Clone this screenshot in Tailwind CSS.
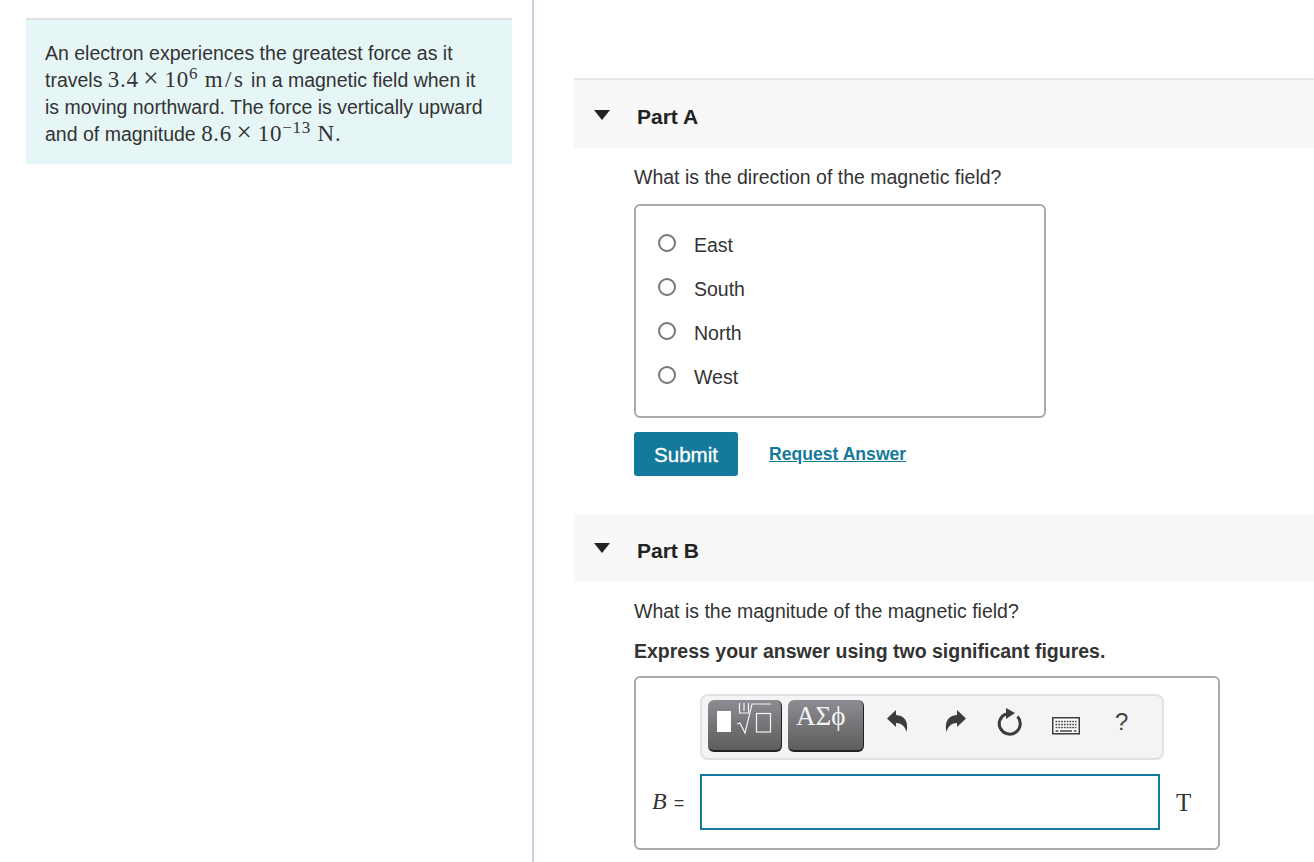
<!DOCTYPE html>
<html><head><meta charset="utf-8">
<script src="https://cdn.jsdelivr.net/npm/@tailwindcss/browser@4"></script>
</head>
<body class="bg-white overflow-hidden">
<div class="flex w-[1314px] h-[862px] overflow-hidden font-['Liberation_Sans',Arial,sans-serif] text-[19.5px] leading-[27px] text-[#333333]">
  <div class="w-[534px] shrink-0 h-full border-r-2 border-[#c6d4e4] pt-[18px] pl-[26px] pr-[20px]">
    <div class="border-t-2 border-[#e0e0e0] bg-[#e6f6f7] h-[146px] pt-[20px] pl-[19px] pr-[10px]">
      <p class="h-[27px] whitespace-nowrap">An electron experiences the greatest force as it</p>
      <p class="h-[27px] whitespace-nowrap">travels <span class="font-['Liberation_Serif',serif] text-[23px] leading-[20px] tracking-[0.7px]">3.4 <span class="text-[27px] leading-[20px] ml-[-2px] mr-[-1px]">×</span> 10<sup class="text-[17px] leading-none top-[-8px] align-baseline relative">6</sup> <span class="tracking-[2.6px]">m/s</span></span> in a magnetic field when it</p>
      <p class="h-[27px] whitespace-nowrap">is moving northward. The force is vertically upward</p>
      <p class="h-[27px] whitespace-nowrap">and of magnitude <span class="font-['Liberation_Serif',serif] text-[23px] leading-[20px] tracking-[0.7px]">8.6 <span class="text-[27px] leading-[20px] ml-[-2px] mr-[-1px]">×</span> 10<sup class="text-[17px] leading-none top-[-8px] align-baseline relative">−13</sup> <span class="tracking-[1px]">N.</span></span></p>
    </div>
  </div>
  <div class="flex-1 pl-[40px] pt-[78px]">
    <div class="h-[70px] border-t-2 border-[#e6e6e6] bg-[#f8f8f8] flex items-center">
      <svg class="ml-[20px] w-[16px] h-[10px] mt-[1px]" viewBox="0 0 16 10"><path d="M0 0H16L8 10Z" fill="#222"/></svg>
      <span class="ml-[27px] mt-[4px] font-bold text-[21px] text-[#222]">Part A</span>
    </div>
    <div class="pl-[60px]">
      <p class="mt-[16px] whitespace-nowrap">What is the direction of the magnetic field?</p>
      <div class="mt-[13px] w-[412px] h-[214px] border-2 border-[#a9a9a9] rounded-[6px] pl-[22px] pt-[17px]">
        <div class="h-[44px] flex items-center gap-[18px]"><span class="w-[18px] h-[18px] rounded-full border-2 border-[#777] bg-white mt-[-4px]"></span><span>East</span></div>
        <div class="h-[44px] flex items-center gap-[18px]"><span class="w-[18px] h-[18px] rounded-full border-2 border-[#777] bg-white mt-[-4px]"></span><span>South</span></div>
        <div class="h-[44px] flex items-center gap-[18px]"><span class="w-[18px] h-[18px] rounded-full border-2 border-[#777] bg-white mt-[-4px]"></span><span>North</span></div>
        <div class="h-[44px] flex items-center gap-[18px]"><span class="w-[18px] h-[18px] rounded-full border-2 border-[#777] bg-white mt-[-4px]"></span><span>West</span></div>
      </div>
      <div class="mt-[14px] flex items-center">
        <div class="w-[104px] h-[44px] bg-[#147a9c] rounded-[3px] text-white text-[20.5px] flex items-center justify-center [-webkit-text-stroke:0.3px_white]">Submit</div>
        <a class="ml-[31px] font-bold text-[17.6px] text-[#147a9c] underline">Request Answer</a>
      </div>
    </div>
    <div class="mt-[38px] h-[68px] bg-[#f8f8f8] flex items-center">
      <svg class="ml-[20px] w-[16px] h-[10px] mt-[-1px]" viewBox="0 0 16 10"><path d="M0 0H16L8 10Z" fill="#222"/></svg>
      <span class="ml-[27px] mt-[4px] font-bold text-[21px] text-[#222]">Part B</span>
    </div>
    <div class="pl-[60px]">
      <p class="mt-[16px] whitespace-nowrap">What is the magnitude of the magnetic field?</p>
      <p class="mt-[13px] font-bold whitespace-nowrap">Express your answer using two significant figures.</p>
      <div class="mt-[11px] w-[586px] h-[174px] border-2 border-[#a9a9a9] rounded-[6px] pl-[64px] pt-[16px]">
        <div class="w-[464px] h-[66px] bg-[#f4f4f4] border-2 border-[#e2e2e2] rounded-[8px] flex items-center pl-[6px] relative">
          <div class="w-[74px] h-[52px] mt-[-2px] rounded-[6px] border-b-2 border-r border-[#222] bg-gradient-to-b from-[#8c8c93] to-[#5e5e5e] relative overflow-hidden">
            <span class="absolute left-[9px] top-[11px] w-[14px] h-[21px] bg-white"></span>
            <svg class="absolute left-0 top-0" width="74" height="52" viewBox="0 0 74 52" fill="none" stroke="#f4f4f4" stroke-width="1.2"><path d="M29 24l3-1 5 10 7-29h19"/><rect x="48.500" y="13.500" width="14" height="18.500"/><path d="M31.500 3v10h9V3M36 3v8"/></svg>
          </div>
          <div class="ml-[6px] mt-[-2px] w-[76px] h-[52px] rounded-[6px] border-b-2 border-r border-[#222] bg-gradient-to-b from-[#8c8c93] to-[#5e5e5e] text-[#f4f4f4] font-['Liberation_Serif',serif] text-[27px] leading-[32px] pl-[8px]">ΑΣϕ</div>
          <svg class="absolute left-[185px] top-[13px]" width="22" height="26" viewBox="0 0 22 26"><path d="M0 9.500 9 1V6C17 6.500 22 12 19.500 23 18 17 14 14 9 14V18Z" fill="#3c3c3c"/></svg>
          <svg class="absolute left-[242px] top-[13px]" width="22" height="26" viewBox="0 0 22 26"><path d="M22 9.500 13 1V6C5 6.500 0 12 2.500 23 4 17 8 14 13 14V18Z" fill="#3c3c3c"/></svg>
          <svg class="absolute left-[294px] top-[12px]" width="30" height="30" viewBox="0 0 30 30" fill="none"><path d="M10 5.800A10.500 10.500 0 1 0 21.500 8.500" stroke="#3c3c3c" stroke-width="3"/><path d="M10 0 19 5 10 11Z" fill="#3c3c3c"/></svg>
          <svg class="absolute left-[350px] top-[21px]" width="28" height="18" viewBox="0 0 28 18"><rect x=".75" y=".75" width="26.500" height="16" fill="#fff" stroke="#3c3c3c" stroke-width="1.500"/><path d="M3.500 4.500h21M3.500 7.500h21M3.500 10.500h21" stroke="#444" stroke-width="1.500" stroke-dasharray="1.800 1"/><path d="M3.500 14h3M8 14h12M22 14h2.500" stroke="#444" stroke-width="1.500"/></svg>
          <span class="absolute left-[413px] top-[12px] text-[24px] text-[#444]">?</span>
        </div>
        <div class="relative mt-[14px]">
          <div class="w-[460px] h-[56px] border-2 border-[#147a9c] bg-white"></div>
          <span class="absolute left-[-48px] top-[14px] font-['Liberation_Serif',serif] text-[24px] italic whitespace-nowrap">B<span class="not-italic font-['Liberation_Sans',sans-serif] text-[18px] ml-[7px]">=</span></span>
          <span class="absolute left-[476px] top-[15px] font-['Liberation_Serif',serif] text-[25px]">T</span>
        </div>
      </div>
    </div>
  </div>
</div>
</body></html>
